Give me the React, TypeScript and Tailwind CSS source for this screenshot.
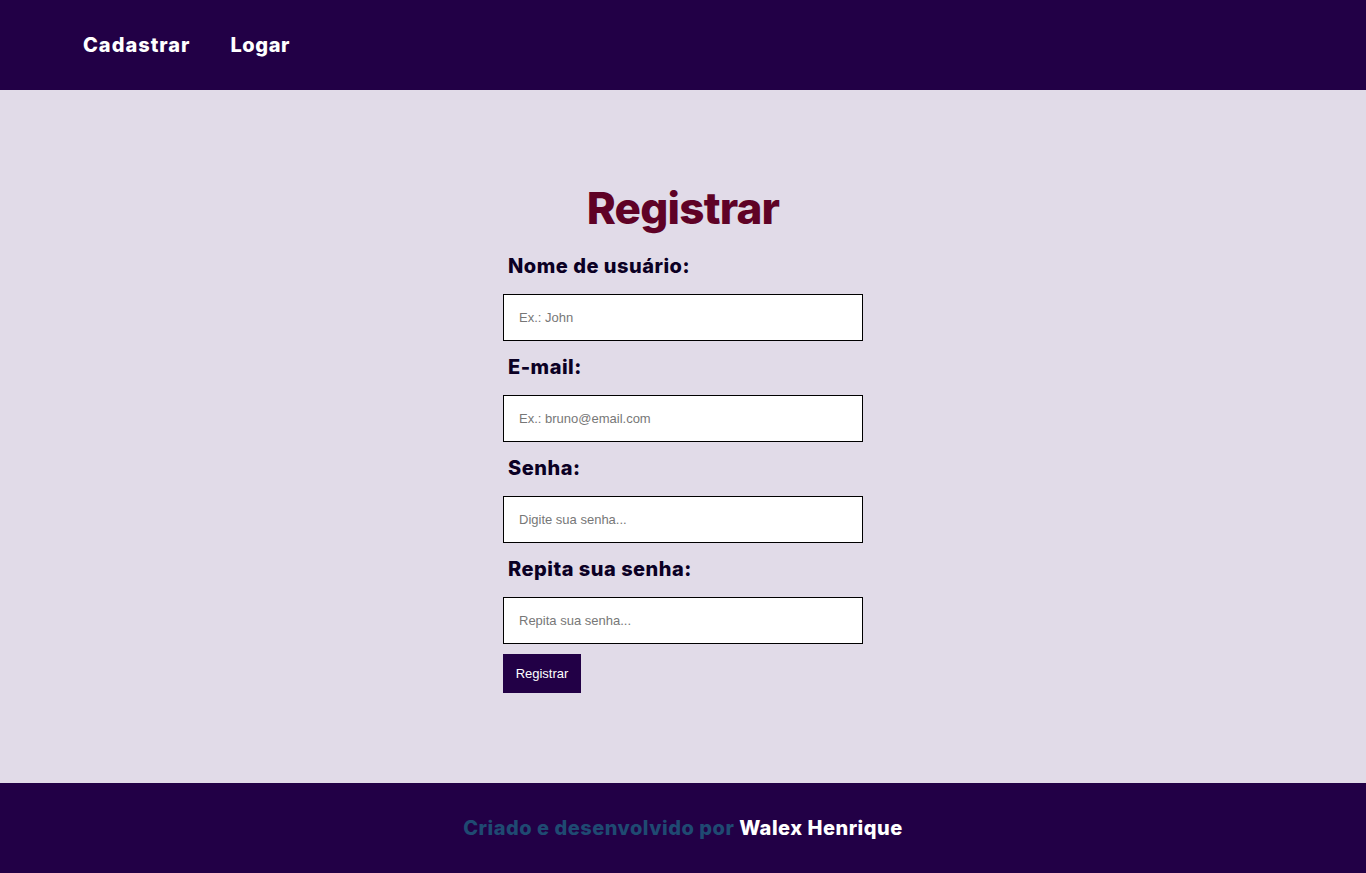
export default function App() {
  const fields = [
    { label: "Nome de usuário:", placeholder: "Ex.: John", type: "text" },
    { label: "E-mail:", placeholder: "Ex.: bruno@email.com", type: "email" },
    { label: "Senha:", placeholder: "Digite sua senha...", type: "password" },
    { label: "Repita sua senha:", placeholder: "Repita sua senha...", type: "password" },
  ]

  return (
    <div className="min-h-[873px] flex flex-col bg-[#e1dbe8] font-['Inter',sans-serif]">
      <header className="h-[90px] bg-[#220046] flex items-center gap-10 px-[83px]">
        <a href="#" className="text-white text-[20px] font-extrabold tracking-[1px]">Cadastrar</a>
        <a href="#" className="text-white text-[20px] font-extrabold tracking-[0.6px]">Logar</a>
      </header>

      <main className="flex-1 flex flex-col items-center pt-[85px]">
        <h1 className="text-[#5f0226] text-[44px] font-extrabold tracking-[-0.8px] leading-[66px] -mb-[1px]">Registrar</h1>
        <form className="w-[360px] flex flex-col" onSubmit={(e) => e.preventDefault()}>
          {fields.map((f) => (
            <div key={f.label} className="flex flex-col">
              <label className="text-[#0b0024] text-[20px] font-extrabold tracking-[0.5px] leading-[30px] pl-[5px] mt-[11px] mb-[13px]">{f.label}</label>
              <input
                type={f.type}
                placeholder={f.placeholder}
                className="h-[47px] bg-white border border-black px-[15px] text-[13px] font-['Liberation_Sans',Arial,sans-serif] placeholder:text-[#777] outline-none"
              />
            </div>
          ))}
          <button className="mt-[10px] self-start w-[78px] h-[39px] bg-[#220046] text-white text-[13px] font-['Liberation_Sans',Arial,sans-serif]">
            Registrar
          </button>
        </form>
      </main>

      <footer className="h-[90px] bg-[#220046] flex items-center justify-center">
        <p className="text-[20px] font-extrabold tracking-[0.5px] text-[#1f4a72]">
          Criado e desenvolvido por <span className="text-white">Walex Henrique</span>
        </p>
      </footer>
    </div>
  )
}
